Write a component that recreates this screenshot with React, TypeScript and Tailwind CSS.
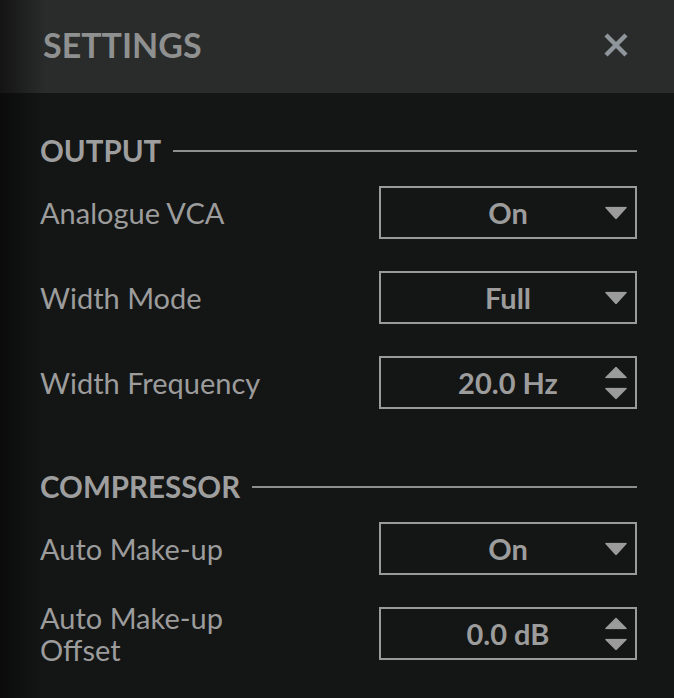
import React from "react";

const Down = () => (
  <svg width="22" height="13" viewBox="0 0 22 13" className="block">
    <path d="M1 1 H21 L11 12 Z" fill="#9b9b9b" stroke="#9b9b9b" strokeWidth="1.5" strokeLinejoin="round" />
  </svg>
);

const Spin = () => (
  <div className="flex flex-col gap-[9px]">
    <svg width="22" height="12" viewBox="0 0 22 12" className="block">
      <path d="M1 11 H21 L11 1 Z" fill="#9b9b9b" stroke="#9b9b9b" strokeWidth="1.5" strokeLinejoin="round" />
    </svg>
    <svg width="22" height="12" viewBox="0 0 22 12" className="block">
      <path d="M1 1 H21 L11 11 Z" fill="#9b9b9b" stroke="#9b9b9b" strokeWidth="1.5" strokeLinejoin="round" />
    </svg>
  </div>
);

function Row({ label, value, spin }: { label: React.ReactNode; value: string; spin?: boolean }) {
  return (
    <div className="flex items-center h-[53px]">
      <div className="flex-1 text-[29px] leading-[32px] text-[#9c9c9c]">{label}</div>
      <div className="relative w-[258px] h-[53px] border-2 border-[#9a9a9a] flex items-center justify-center">
        <span className="text-[29px] font-bold text-[#9c9c9c] leading-none">{value}</span>
        <div className="absolute right-[8px] top-1/2 -translate-y-1/2">{spin ? <Spin /> : <Down />}</div>
      </div>
    </div>
  );
}

function Heading({ text }: { text: string }) {
  return (
    <div className="flex items-center h-[30px] gap-[12px]">
      <span className="text-[29.5px] font-bold text-[#9e9e9e] leading-none">{text}</span>
      <div className="flex-1 h-[2px] bg-[#8e8e8e]" />
    </div>
  );
}

export default function App() {
  return (
    <div
      className="w-[674px] h-[698px] overflow-hidden flex flex-col bg-[linear-gradient(to_right,#0b0b0b,#141515_42px)]"
      style={{ fontFamily: "Lato, 'Open Sans', sans-serif" }}
    >
      <div className="h-[93px] shrink-0 flex items-center justify-between pl-[43px] pr-[46px] pb-[4px] bg-[linear-gradient(to_right,#141414,#2a2b2b_45px)]">
        <span className="text-[34px] font-bold text-[#8f9090] leading-none">SETTINGS</span>
        <svg width="24" height="24" viewBox="0 0 24 24">
          <path d="M2 2 L22 22 M22 2 L2 22" stroke="#8f969b" strokeWidth="4.5" strokeLinecap="butt" />
        </svg>
      </div>
      <div className="flex flex-col pl-[40px] pr-[37px]">
        <div className="mt-[43px]">
          <Heading text="OUTPUT" />
        </div>
        <div className="mt-[20px] flex flex-col gap-[32px]">
          <Row label="Analogue VCA" value="On" />
          <Row label="Width Mode" value="Full" />
          <Row label="Width Frequency" value="20.0 Hz" spin />
        </div>
        <div className="mt-[63px]">
          <Heading text="COMPRESSOR" />
        </div>
        <div className="mt-[20px] flex flex-col gap-[32px]">
          <Row label="Auto Make-up" value="On" />
          <Row label={<>Auto Make-up<br />Offset</>} value="0.0 dB" spin />
        </div>
      </div>
    </div>
  );
}
